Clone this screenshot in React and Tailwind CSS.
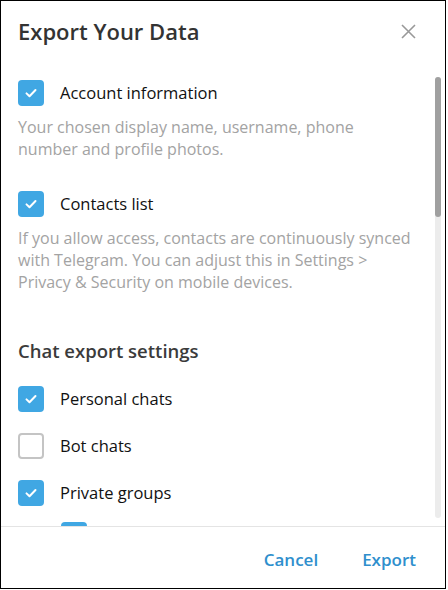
import React, { useState } from "react";

// one row: blue rounded checkbox + label
function CheckRow({ label, checked, onToggle, className = "", ariaLabel }) {
  return (
    <button
      type="button"
      onClick={onToggle}
      aria-label={ariaLabel}
      className={`flex items-center gap-[16px] text-left ${className}`}
    >
      <span
        className={`flex h-[26px] w-[26px] shrink-0 items-center justify-center rounded-[4px] ${
          checked ? "bg-[#40a7e3]" : "border-2 border-[#c4c4c4] bg-white"
        }`}
      >
        {checked && (
          <svg width="14" height="14" viewBox="0 0 14 14" fill="none">
            <path
              d="M2.5 7.4l3 2.9 6-6.3"
              stroke="white"
              strokeWidth="2"
              strokeLinecap="round"
              strokeLinejoin="round"
            />
          </svg>
        )}
      </span>
      {label && <span className="text-[16.5px] leading-[26px] text-[#111]">{label}</span>}
    </button>
  );
}

export default function App() {
  const [opts, setOpts] = useState({
    account: true,
    contacts: true,
    personal: true,
    bots: false,
    privateGroups: true,
    privateOnly: true,
  });
  const toggle = (k) => setOpts((o) => ({ ...o, [k]: !o[k] }));

  return (
    <div className="h-[590px] w-[448px] bg-white font-['Open_Sans',sans-serif]">
      <div className="flex h-[589px] w-[446px] flex-col border border-black bg-white">
        {/* header */}
        <header className="flex h-[61px] shrink-0 items-center justify-between pl-[17px] pr-[28px]">
          <h1 className="text-[22px] font-semibold text-[#333]">Export Your Data</h1>
          <button type="button" className="p-[1px]" aria-label="Close">
            <svg width="15" height="15" viewBox="0 0 15 15" fill="none">
              <path d="M1 1l13 13M14 1L1 14" stroke="#999" strokeWidth="1.6" />
            </svg>
          </button>
        </header>

        {/* scrolling body */}
        <div className="flex min-h-0 flex-1">
          <div className="min-w-0 flex-1 overflow-hidden pl-[17px] pr-[20px] pt-[18px]">
            <CheckRow label="Account information" checked={opts.account} onToggle={() => toggle("account")} />
            <p className="mt-[10px] text-[16px] leading-[22px] text-[#a3a3a3]">
              Your chosen display name, username, phone number and profile photos.
            </p>

            <CheckRow
              className="mt-[31px]"
              label="Contacts list"
              checked={opts.contacts}
              onToggle={() => toggle("contacts")}
            />
            <p className="mt-[10px] text-[16px] leading-[22px] text-[#a3a3a3]">
              If you allow access, contacts are continuously synced with Telegram. You can adjust
              this in Settings &gt; Privacy &amp; Security on mobile devices.
            </p>

            <h2 className="mt-[45px] text-[18.5px] font-semibold leading-[26px] text-[#3b3b3b]">
              Chat export settings
            </h2>

            <div className="mt-[22px] flex flex-col gap-[21px]">
              <CheckRow label="Personal chats" checked={opts.personal} onToggle={() => toggle("personal")} />
              <CheckRow label="Bot chats" checked={opts.bots} onToggle={() => toggle("bots")} />
              <CheckRow
                label="Private groups"
                checked={opts.privateGroups}
                onToggle={() => toggle("privateGroups")}
              />
            </div>
            {/* nested option, scrolled below the fold */}
            <CheckRow
              className="ml-[43px] mt-[16px]"
              ariaLabel="Only my messages"
              checked={opts.privateOnly}
              onToggle={() => toggle("privateOnly")}
            />
          </div>

          {/* scrollbar */}
          <div className="mb-[8px] mr-[4px] mt-[15px] flex w-[6px] shrink-0 flex-col rounded-full bg-[#ececec]">
            <div className="h-[140px] rounded-full bg-[#a0a0a0]" />
          </div>
        </div>

        {/* footer */}
        <footer className="flex h-[62px] shrink-0 items-center justify-end gap-[44px] border-t border-[#e4e4e4] pr-[29px] pt-[4px]">
          <button type="button" className="text-[17px] font-semibold text-[#2f8fcd]">
            Cancel
          </button>
          <button type="button" className="text-[17px] font-semibold text-[#2f8fcd]">
            Export
          </button>
        </footer>
      </div>
    </div>
  );
}
